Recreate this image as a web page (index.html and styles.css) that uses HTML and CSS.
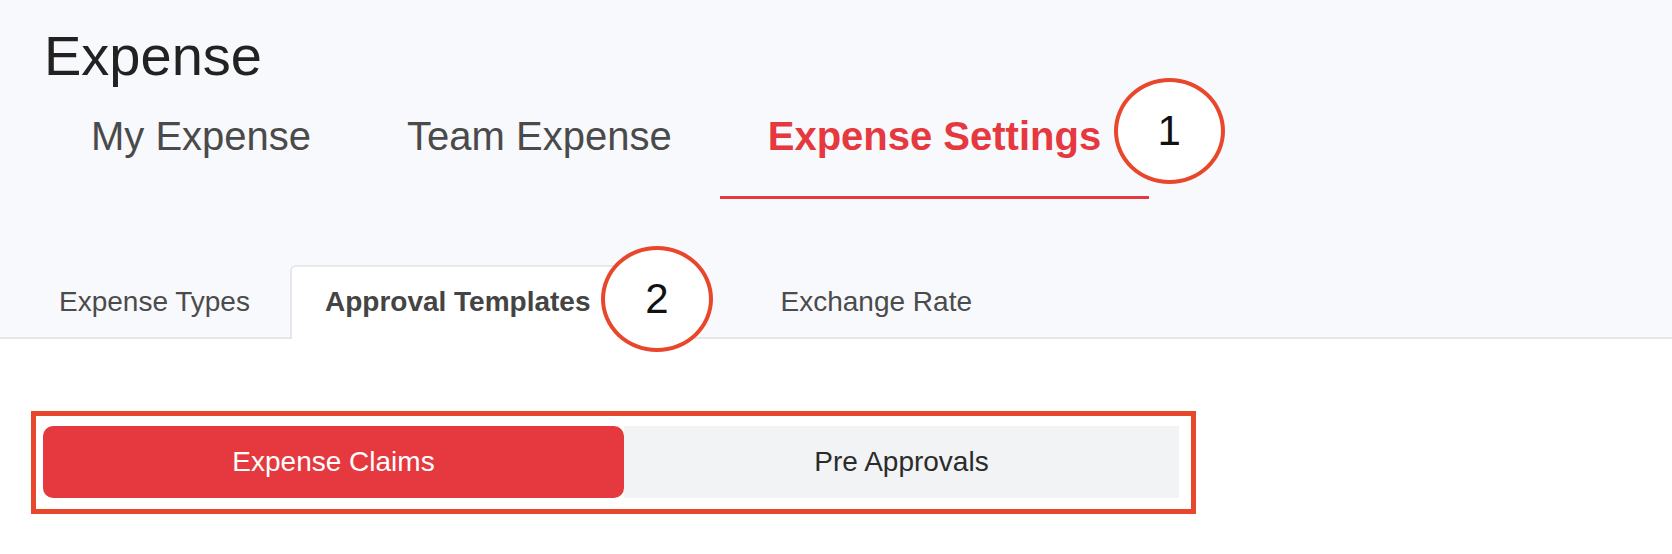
FILE: index.html
```html
<!DOCTYPE html>
<html lang="en">
<head>
<meta charset="utf-8">
<title>Expense</title>
<link rel="stylesheet" href="styles.css">
</head>
<body>
<header class="page-head">
  <h1 class="title">Expense</h1>
  <nav class="main-nav">
    <a class="main-tab">My Expense</a>
    <a class="main-tab">Team Expense</a>
    <a class="main-tab active">Expense Settings<span class="callout callout-1">1</span></a>
  </nav>
  <nav class="sub-nav">
    <a class="sub-tab">Expense Types</a>
    <a class="sub-tab active">Approval Templates<span class="callout callout-2">2</span></a>
    <a class="sub-tab sub-tab-far">Exchange Rate</a>
  </nav>
</header>
<main class="content">
  <div class="highlight">
    <div class="segment">
      <button class="seg seg-on">Expense Claims</button>
      <button class="seg seg-off">Pre Approvals</button>
    </div>
  </div>
</main>
</body>
</html>
```

FILE: styles.css
```css
* { box-sizing: border-box; }

html, body {
  margin: 0;
  padding: 0;
  background: #ffffff;
  font-family: "Liberation Sans", Arial, Helvetica, sans-serif;
}

.page-head {
  background: #f8f9fc;
  padding: 26px 0 0 43px;
  border-bottom: 2px solid #e5e7eb;
}

.title {
  margin: 0;
  font-size: 56px;
  line-height: 60px;
  font-weight: 400;
  color: #222222;
  padding-left: 1px;
}

.main-nav {
  display: flex;
  margin-top: 30px;
}

.main-tab {
  position: relative;
  display: block;
  font-size: 40px;
  line-height: 40px;
  padding: 0 48px 40px;
  color: #4a4a4a;
  border-bottom: 3px solid transparent;
  white-space: nowrap;
}

.main-tab.active {
  color: #e5383f;
  font-weight: 700;
  border-bottom-color: #e5383f;
}

.callout {
  position: absolute;
  display: flex;
  align-items: center;
  justify-content: center;
  background: #ffffff;
  border: 4px solid #e8472c;
  border-radius: 50%;
  font-weight: 400;
  color: #111111;
  font-size: 42px;
  line-height: 1;
}

.callout-1 {
  left: 394px;
  top: -38px;
  width: 111px;
  height: 106px;
}

.callout-2 {
  left: 309px;
  top: -21px;
  width: 112px;
  height: 106px;
  z-index: 2;
}

.sub-nav {
  display: flex;
  gap: 5px;
  margin: 66px 0 0 -19px;
}

.sub-tab {
  position: relative;
  display: block;
  font-size: 28px;
  line-height: 28px;
  padding: 21px 33px 21px;
  color: #4b4b4b;
  white-space: nowrap;
  border: 2px solid transparent;
  border-bottom: 0;
}

.sub-tab.active {
  background: #ffffff;
  border-color: #e6e8ec;
  border-radius: 6px 6px 0 0;
  font-weight: 700;
  color: #444444;
  margin-bottom: -2px;
  padding-bottom: 23px;
}

.sub-tab-far {
  margin-left: 115px;
}

.content {
  padding: 72px 0 0 31px;
}

.highlight {
  width: 1165px;
  border: 5px solid #e8472c;
  padding: 10px 12px 11px 7px;
}

.segment {
  display: flex;
  height: 72px;
}

.seg {
  margin: 0;
  border: 0;
  font-family: inherit;
  font-size: 28px;
  line-height: 72px;
  padding: 0;
  text-align: center;
}

.seg-on {
  width: 581px;
  background: #e5383f;
  color: #ffffff;
  border-radius: 10px;
}

.seg-off {
  flex: 1;
  background: #f2f3f5;
  color: #2b2b2b;
}
```
